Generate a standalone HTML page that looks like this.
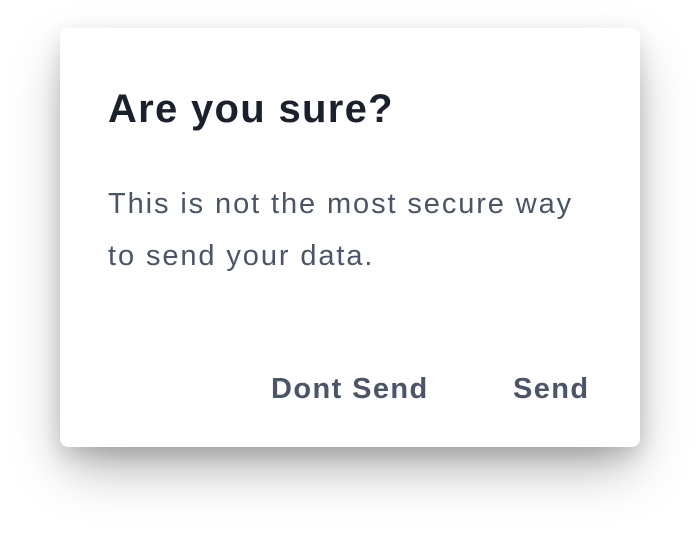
<!DOCTYPE html>
<html><head><style>
html,body{margin:0;width:700px;height:540px;background:#fff;overflow:hidden;font-family:"Liberation Sans",sans-serif;}
.card{position:absolute;left:60px;top:28px;width:580px;height:419px;background:#fff;border-radius:8px;box-shadow:0 25px 50px -8px rgba(0,0,0,0.35),0 8px 20px rgba(0,0,0,0.12);}
h1{position:absolute;left:48px;top:59px;margin:0;font-size:40px;font-weight:bold;color:#1a202c;letter-spacing:1.3px;white-space:nowrap;}
p{position:absolute;left:48px;top:150px;margin:0;width:520px;font-size:29px;line-height:52px;color:#4a5568;letter-spacing:1.9px;white-space:nowrap;}
.b{position:absolute;top:345px;font-size:29px;font-weight:bold;color:#4a5568;letter-spacing:1.4px;white-space:nowrap;}
</style></head><body>
<div class="card">
<h1>Are you sure?</h1>
<p>This is not the most secure way<br>to send your data.</p>
<div class="b" style="left:211px">Dont Send</div>
<div class="b" style="left:453px">Send</div>
</div>
</body></html>
